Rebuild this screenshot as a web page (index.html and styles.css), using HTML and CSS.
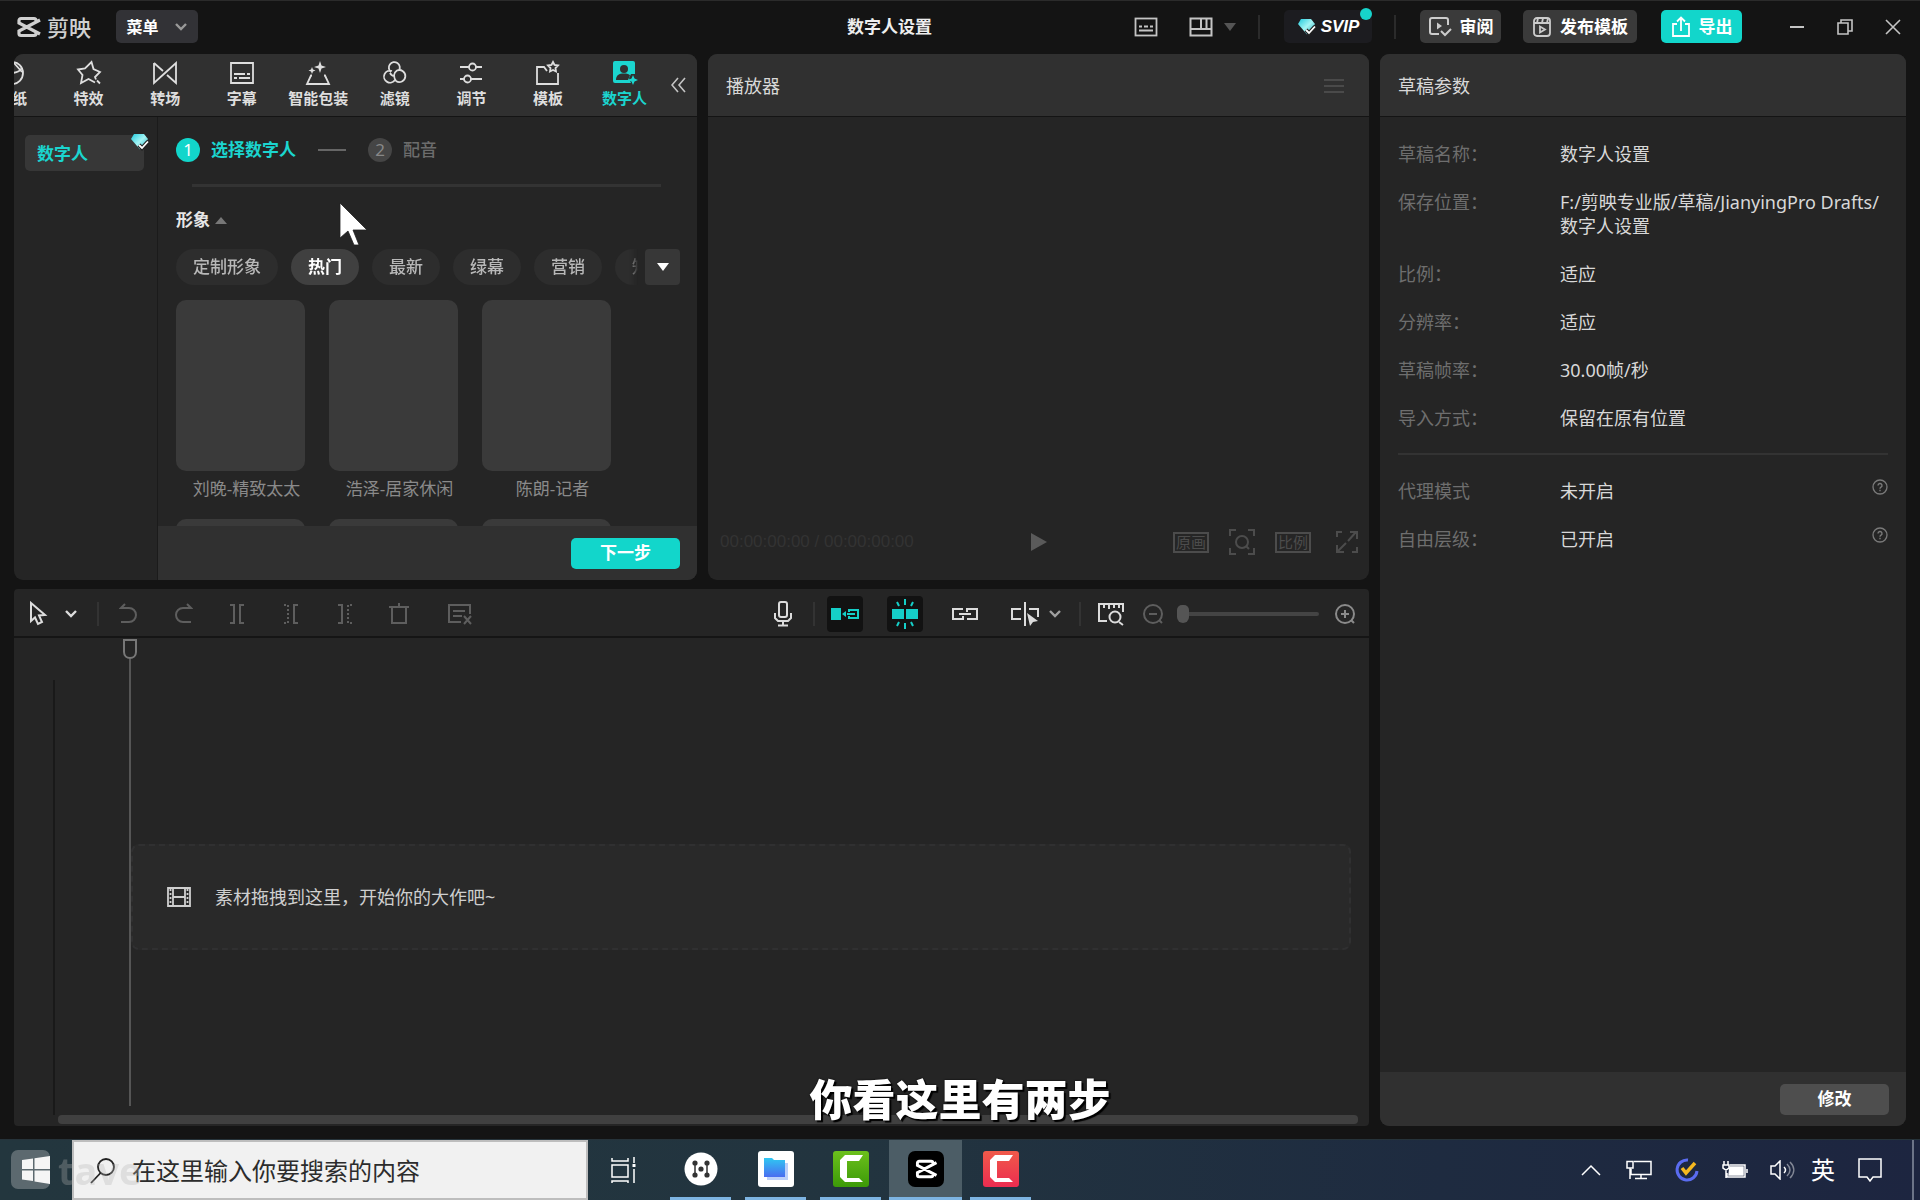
FILE: index.html
```html
<!DOCTYPE html>
<html lang="zh-CN">
<head>
<meta charset="utf-8">
<title>数字人设置</title>
<link rel="stylesheet" href="styles.css">
</head>
<body>
<svg class="defs" aria-hidden="true">
  <defs>
    <linearGradient id="gem" x1="0" y1="0" x2="1" y2="1"><stop offset="0" stop-color="#1fc9dc"/><stop offset=".5" stop-color="#a5f5f5"/><stop offset="1" stop-color="#12a5b5"/></linearGradient>
    <linearGradient id="folder" x1="0" y1="0" x2="0" y2="1"><stop offset="0" stop-color="#2fc8f2"/><stop offset="1" stop-color="#4a6df0"/></linearGradient>
    <linearGradient id="green" x1="0" y1="0" x2="0" y2="1"><stop offset="0" stop-color="#6cc01c"/><stop offset="1" stop-color="#3c9a08"/></linearGradient>
    <linearGradient id="red" x1="0" y1="0" x2="0" y2="1"><stop offset="0" stop-color="#f05a4a"/><stop offset="1" stop-color="#ec2c50"/></linearGradient>
    <symbol id="i-chev" viewBox="0 0 14 10"><path d="M2 2l5 5 5-5" fill="none" stroke="currentColor" stroke-width="2.4"/></symbol>
    <symbol id="i-cc" viewBox="0 0 26 22"><path d="M20 6V4.500a2 2 0 0 0-2-2H5a2 2 0 0 0-2 2V7l21 11M24 4L3 15v2.500a2 2 0 0 0 2 2h13a2 2 0 0 0 2-2V16" fill="none" stroke="currentColor" stroke-width="3.200"/></symbol>
    <symbol id="i-gem" viewBox="0 0 20 18"><path d="M4 1h10l4 5-8 10.500L1 6z" fill="url(#gem)"/><path d="M9 12l3 3 6-6.500" fill="none" stroke="#222" stroke-width="4"/><path d="M9 12l3 3 6-6.500" fill="none" stroke="#fff" stroke-width="1.800"/></symbol>
    <symbol id="i-help" viewBox="0 0 16 16"><circle cx="8" cy="8" r="7" fill="none" stroke="currentColor" stroke-width="1.300"/><path d="M6 6.500a2 2 0 1 1 3 1.700c-.700.400-1 .800-1 1.500M8 10.800v1.400" fill="none" stroke="currentColor" stroke-width="1.400"/></symbol>
  </defs>
</svg>
<main class="app">
  <header class="titlebar">
    <div class="brand"><svg width="26" height="22"><use href="#i-cc"/></svg><span>剪映</span></div>
    <button class="menu-btn">菜单<svg width="14" height="10"><use href="#i-chev"/></svg></button>
    <h1 class="title">数字人设置</h1>
    <div class="title-actions">
      <button class="ghost" aria-label="快捷键"><svg width="24" height="20" viewBox="0 0 24 20" fill="none" stroke="currentColor" stroke-width="1.800"><rect x="1.500" y="1.500" width="21" height="17"/><path d="M5 9.500h3m2 0h4m2 0h3M5 13.500h14"/></svg></button>
      <button class="ghost layout" aria-label="布局"><svg width="24" height="20" viewBox="0 0 24 20" fill="none" stroke="currentColor" stroke-width="2"><path d="M1.500 1.500h21v17h-21zM1.500 12h21M12 1.500V12M17.500 1.500V12"/></svg><svg class="dim" width="12" height="8" viewBox="0 0 12 8"><path d="M0 0h12L6 8z" fill="currentColor"/></svg></button>
      <i class="vsep"></i>
      <button class="svip"><svg width="20" height="18"><use href="#i-gem"/></svg>SVIP<i class="dot"></i></button>
      <i class="vsep"></i>
      <button class="pill-btn"><svg width="24" height="22" viewBox="0 0 24 22" fill="none" stroke="currentColor" stroke-width="2"><path d="M20 9V4a2 2 0 0 0-2-2H4a2 2 0 0 0-2 2v12a2 2 0 0 0 2 2h7M13 15l4 4 6-6"/><path d="M9 6.500v7l5-3.500z" fill="currentColor" stroke="none"/></svg>审阅</button>
      <button class="pill-btn publish"><svg width="20" height="22" viewBox="0 0 20 22" fill="none" stroke="currentColor" stroke-width="1.800"><rect x="2" y="2" width="16" height="18" rx="3"/><path d="M2 7h16M6 2L5 7M11 2l-1 5M16 2l-1 5M8 10.500v6l5-3z"/></svg>发布模板</button>
      <button class="pill-btn export"><svg width="20" height="22" viewBox="0 0 20 22" fill="none" stroke="currentColor" stroke-width="1.800"><path d="M6 8H2v12h16V8h-4M10 15V2M6 5.500L10 1.500l4 4"/></svg>导出</button>
    </div>
    <div class="win-ctl">
      <button class="ghost" aria-label="最小化"><svg width="16" height="16" viewBox="0 0 16 16"><path d="M1 8h14" stroke="currentColor" stroke-width="2"/></svg></button>
      <button class="ghost" aria-label="还原"><svg width="18" height="18" viewBox="0 0 18 18" fill="none" stroke="currentColor" stroke-width="1.600"><path d="M2 5h10v11H2zM5 5V2h11v11h-4"/></svg></button>
      <button class="ghost" aria-label="关闭"><svg width="16" height="16" viewBox="0 0 16 16"><path d="M1 1l14 14M15 1L1 15" stroke="currentColor" stroke-width="1.600"/></svg></button>
    </div>
  </header>

  <div class="workspace">
    <section class="panel library">
      <nav class="tabs">
        <div class="tab-strip">
          <button class="tab"><svg width="26" height="26" viewBox="0 0 26 26"><circle cx="13" cy="13" r="11"/><path d="M12 13c6 0 9-2 11-5M15 3l8 9"/></svg>贴纸</button>
          <button class="tab"><svg width="26" height="26" viewBox="0 0 26 26"><path d="M19 22.500L12.500 19 5 23l1.500-8L2 9.500 9 8.500 15.500 2l2 7 6.500 3-5 5 1 2.500M21 20.500l3 3"/></svg>特效</button>
          <button class="tab"><svg width="26" height="26" viewBox="0 0 26 26"><path d="M2 3v20L13 13 24 3v20L15 15M2 3l9 8"/></svg>转场</button>
          <button class="tab"><svg width="26" height="26" viewBox="0 0 26 26"><path d="M2 3h22v20H2zM5 14h11m2 0h3M5 18h3m2 0h11"/></svg>字幕</button>
          <button class="tab"><svg width="26" height="26" viewBox="0 0 26 26"><path d="M7 15.500H6L2 24h22l-4-8.500h-1"/><path class="fill" d="M15 1l1.500 4.500L21 7l-4.500 1.500L15 13l-1.500-4.500L9 7l4.500-1.500zM7 7l1 2.500 2.500 1L8 11.500 7 14l-1-2.500-2.500-1L6 9.500z"/></svg>智能包装</button>
          <button class="tab"><svg width="26" height="26" viewBox="0 0 26 26"><path d="M9 12a5.500 5.500 0 1 1 8-1.500M10 11a6 6 0 1 0 3 9M14 21a6 6 0 1 0 1-10.500c-3 2-4 6-1 10.500M8 13c1 2 2.500 3 4.500 3"/></svg>滤镜</button>
          <button class="tab"><svg width="26" height="26" viewBox="0 0 26 26"><path d="M2 7h9m7 0h6M2 19h4m7 0h11"/><circle cx="14.500" cy="7" r="3.500"/><circle cx="9.500" cy="19" r="3.500"/></svg>调节</button>
          <button class="tab"><svg width="26" height="26" viewBox="0 0 26 26"><path d="M23 13v11H2V7h7l3 4M18 2l1.500 3 3.500.500-2.500 2.500.500 3.500-3-1.500-3 1.500.500-3.500L13 5.500l3.500-.500z"/></svg>模板</button>
          <button class="tab active"><svg width="26" height="26" viewBox="0 0 26 26"><path class="fill" d="M3 1h18a2 2 0 0 1 2 2v11h-4l-2 4 2 5H3a2 2 0 0 1-2-2V3a2 2 0 0 1 2-2z"/><circle class="hole" cx="12" cy="9" r="4"/><path class="hole" d="M4 20c0-5 3-6.500 8-6.500 3 0 5 .500 6 2L16 20z"/><path class="fill" d="M21 15l1.500 3.500L26 20l-3.500 1.500L21 25l-1.500-3.500L16 20l3.500-1.500z"/></svg>数字人</button>
        </div>
        <button class="collapse ghost" aria-label="收起"><svg width="16" height="16" viewBox="0 0 16 16" fill="none" stroke="currentColor" stroke-width="1.600"><path d="M7 1L1 8l6 7M14 1L8 8l6 7"/></svg></button>
      </nav>
      <div class="library-body">
        <aside class="side"><button class="side-item">数字人<svg class="badge" width="20" height="18"><use href="#i-gem"/></svg></button></aside>
        <div class="content">
          <div class="scroll">
            <ol class="steps">
              <li class="on"><b>1</b>选择数字人</li>
              <li class="dash"></li>
              <li><b>2</b>配音</li>
            </ol>
            <div class="rule"></div>
            <h2 class="group">形象<svg width="12" height="7" viewBox="0 0 12 7"><path d="M0 7h12L6 0z" fill="#777"/></svg></h2>
            <div class="filters">
              <div class="chips"><button>定制形象</button><button class="on">热门</button><button>最新</button><button>绿幕</button><button>营销</button><button>知识</button></div>
              <button class="more" aria-label="更多"><svg width="12" height="8" viewBox="0 0 12 8"><path d="M0 0h12L6 8z" fill="currentColor"/></svg></button>
            </div>
            <div class="cards">
              <figure><div class="thumb"></div><figcaption>刘晚-精致太太</figcaption></figure>
              <figure><div class="thumb"></div><figcaption>浩泽-居家休闲</figcaption></figure>
              <figure><div class="thumb"></div><figcaption>陈朗-记者</figcaption></figure>
              <figure><div class="thumb"></div></figure>
              <figure><div class="thumb"></div></figure>
              <figure><div class="thumb"></div></figure>
            </div>
          </div>
          <footer class="foot"><button class="primary">下一步</button></footer>
        </div>
      </div>
    </section>

    <section class="panel player">
      <header class="panel-head">播放器<svg width="20" height="16" viewBox="0 0 20 16"><path d="M0 2h20M0 8h20M0 14h20" stroke="#4a4a4a" stroke-width="2"/></svg></header>
      <div class="stage"></div>
      <div class="player-bar">
        <span class="time">00:00:00:00 / 00:00:00:00</span>
        <button class="ghost play" aria-label="播放"><svg width="16" height="18" viewBox="0 0 16 18"><path d="M0 0l16 9L0 18z" fill="#5a5a5a"/></svg></button>
        <div class="player-tools">
          <button class="boxed">原画</button>
          <button class="ghost" aria-label="缩放"><svg width="26" height="26" viewBox="0 0 26 26" fill="none" stroke="currentColor" stroke-width="2"><path d="M1 7V1h6M19 1h6v6M25 19v6h-6M7 25H1v-6M17 17l3 3"/><circle cx="13" cy="13" r="6"/></svg></button>
          <button class="boxed">比例</button>
          <button class="ghost full" aria-label="全屏"><svg width="22" height="22" viewBox="0 0 22 22" fill="none" stroke="currentColor" stroke-width="2"><path d="M1 6V1h5M12 10l8-9M14 1h7v7M10 12l-9 9M1 14v7h7M21 16v5h-5"/></svg></button>
        </div>
      </div>
    </section>

    <section class="panel params">
      <header class="panel-head">草稿参数</header>
      <div class="param-body">
        <dl>
          <dt>草稿名称：</dt><dd>数字人设置</dd>
          <dt>保存位置：</dt><dd>F:/剪映专业版/草稿/JianyingPro Drafts/<br>数字人设置</dd>
          <dt>比例：</dt><dd>适应</dd>
          <dt>分辨率：</dt><dd>适应</dd>
          <dt>草稿帧率：</dt><dd>30.00帧/秒</dd>
          <dt>导入方式：</dt><dd>保留在原有位置</dd>
        </dl>
        <dl class="second">
          <dt>代理模式</dt><dd>未开启<svg width="16" height="16"><use href="#i-help"/></svg></dd>
          <dt>自由层级：</dt><dd>已开启<svg width="16" height="16"><use href="#i-help"/></svg></dd>
        </dl>
      </div>
      <footer class="foot"><button class="secondary">修改</button></footer>
    </section>

    <section class="panel timeline">
      <div class="toolbar">
        <div class="tools-a">
          <button class="tool lit" aria-label="选择"><svg width="20" height="26" viewBox="0 0 20 26"><path d="M3 2v18l4-3.500L10 23l4-2-3-6.500 6-.500z"/></svg></button>
          <button class="tool lit caret" aria-label="选择工具"><svg width="14" height="10"><use href="#i-chev"/></svg></button>
        </div>
        <i class="vsep"></i>
        <div class="tools-b">
          <button class="tool" aria-label="撤销"><svg width="20" height="22" viewBox="0 0 20 22"><path d="M6 1L2 5h8a7 7 0 0 1 0 14H2"/></svg></button>
          <button class="tool" aria-label="恢复"><svg width="20" height="22" viewBox="0 0 20 22"><path d="M14 1l4 4h-8a7 7 0 0 0 0 14h8"/></svg></button>
          <button class="tool" aria-label="分割"><svg width="20" height="22" viewBox="0 0 20 22"><path d="M3 2h4v18H3M17 2h-4v18h4"/></svg></button>
          <button class="tool" aria-label="向左裁剪"><svg width="20" height="22" viewBox="0 0 20 22"><path d="M17 2h-4v18h4"/><path d="M3 2h4v18H3" stroke-dasharray="2 2"/></svg></button>
          <button class="tool" aria-label="向右裁剪"><svg width="20" height="22" viewBox="0 0 20 22"><path d="M3 2h4v18H3"/><path d="M17 2h-4v18h4" stroke-dasharray="2 2"/></svg></button>
          <button class="tool" aria-label="删除"><svg width="22" height="22" viewBox="0 0 22 22"><path d="M4 4v16h14V4M1 4h20M11 0v4"/></svg></button>
          <button class="tool wide" aria-label="文稿剪辑"><svg width="26" height="22" viewBox="0 0 26 22"><path d="M14 19H2V2h21v9M6 8h12M6 13h9M17 13l7 8M24 13l-7 8"/></svg></button>
        </div>
        <div class="tools-c">
          <button class="tool lit mid" aria-label="录音"><svg width="20" height="26" viewBox="0 0 20 26"><rect x="6" y="1" width="8" height="15" rx="2"/><path d="M2 12v5l3 3h10l3-3v-5M10 20v4M5 24.500h10"/></svg></button>
          <i class="vsep"></i>
          <div class="tools-d">
            <button class="tool toggle" aria-label="主轨磁吸"><svg width="28" height="14" viewBox="0 0 28 14"><path class="fill" d="M0 1h10v12H0zM11 7l4-3v6z"/><path d="M18 5V3h9v8h-9V9M16 7h8"/></svg></button>
            <button class="tool toggle" aria-label="自动吸附"><svg width="28" height="30" viewBox="0 0 28 30"><path class="fill" d="M1 10h12v10H1zM15 10h12v10H15z"/><path d="M14 0v6M14 24v6M6 3l2 4M22 3l-2 4M6 27l2-4M22 27l-2-4"/></svg></button>
            <button class="tool lit mid" aria-label="联动"><svg width="28" height="14" viewBox="0 0 28 14"><path d="M12 2H2v10h10V9M16 12h10V2H16v3M8 7h12"/></svg></button>
            <div class="split">
              <button class="tool lit mid" aria-label="预览轴"><svg width="30" height="26" viewBox="0 0 30 26"><path d="M11 8H2v10h9M15 1v24M19 8h9v8"/><path class="fill" d="M17 12l11 8-5 1-3 4z"/></svg></button>
              <button class="tool caret" aria-label="预览轴选项"><svg width="14" height="10"><use href="#i-chev"/></svg></button>
            </div>
          </div>
          <i class="vsep"></i>
          <button class="tool lit mid" aria-label="标尺"><svg width="28" height="24" viewBox="0 0 28 24"><path d="M10 19H2V2h24v8M7 2v4M12 2v5M17 2v4M22 2v4M22 20l4 3"/><circle cx="18" cy="15" r="5.500"/></svg></button>
          <button class="tool caret" aria-label="缩小"><svg width="22" height="22" viewBox="0 0 22 22"><circle cx="11" cy="11" r="9"/><path d="M7 11h8M17 17l3 3"/></svg></button>
          <input class="zoom" type="range" min="0" max="100" value="0" aria-label="时间线缩放">
          <button class="tool bright" aria-label="放大"><svg width="22" height="22" viewBox="0 0 22 22"><circle cx="11" cy="11" r="9"/><path d="M7 11h8M11 7v8M17 17l3 3"/></svg></button>
        </div>
      </div>
      <div class="tracks">
        <div class="gutter"></div>
        <div class="dropzone"><svg width="24" height="20" viewBox="0 0 24 20" fill="none" stroke="currentColor" stroke-width="1.800"><path d="M1 1h22v18H1zM6 1v18M18 1v18M6 10h12"/><path d="M3.500 2v16M20.500 2v16" stroke-dasharray="2 2"/></svg>素材拖拽到这里，开始你的大作吧~</div>
        <div class="playhead"><svg width="16" height="22" viewBox="0 0 16 22"><path d="M2 2h12v12c0 4-3 6-6 6s-6-2-6-6z" fill="none" stroke="#777" stroke-width="2"/></svg></div>
      </div>
      <div class="hscroll"></div>
    </section>
  </div>
</main>

<footer class="taskbar">
  <button class="start" aria-label="开始"><svg width="28" height="28" viewBox="0 0 28 28" fill="#fff"><path d="M0 4l11-1.500V13H0zM12.500 2.300L28 0v13H12.500zM0 14.500h11V25L0 23.500zM12.500 14.500H28V28l-15.500-2.500z"/></svg></button>
  <label class="search"><svg width="26" height="26" viewBox="0 0 26 26" fill="none" stroke="#222" stroke-width="1.800"><circle cx="16" cy="9" r="8"/><path d="M10.500 15L1 25"/></svg><input type="text" placeholder="在这里输入你要搜索的内容" aria-label="搜索"></label>
  <button class="taskview" aria-label="任务视图"><svg width="26" height="26" viewBox="0 0 26 26" fill="none" stroke="#fff" stroke-width="1.500"><path d="M1 1v3h16V1M1 8h16v12H1zM1 27v-3h16v3M23 0v6M23 12v14"/><path d="M21.500 7h3v3h-3z" fill="#fff" stroke="none"/></svg></button>
  <div class="apps">
    <button aria-label="应用"><svg width="36" height="36" viewBox="0 0 36 36"><circle cx="18" cy="18" r="16.500" fill="#fff"/><path d="M12 12v12M24 12v12" stroke="#333" stroke-width="1.500"/><g fill="#333"><circle cx="12" cy="12" r="2.600"/><circle cx="12" cy="24" r="2.600"/><circle cx="24" cy="12" r="2.600"/><circle cx="24" cy="24" r="2.600"/><circle cx="18" cy="18" r="2.600"/></g></svg></button>
    <button aria-label="云盘"><svg width="36" height="36" viewBox="0 0 36 36"><rect width="36" height="36" rx="3" fill="#fff"/><path d="M9 12h21v17H9z" fill="#bcd0fa"/><path d="M6 7h8l2 2h11v17H6z" fill="url(#folder)"/></svg></button>
    <button aria-label="Camtasia"><svg width="36" height="36" viewBox="0 0 36 36"><rect width="36" height="36" rx="3" fill="url(#green)"/><path d="M30 4l-4 6H14v17h12l4 4H12l-5-5V9l5-5z" fill="#fff"/></svg></button>
    <button class="current" aria-label="剪映"><svg width="36" height="36" viewBox="0 0 36 36"><rect width="36" height="36" rx="7" fill="#000"/><svg x="6" y="8" width="25" height="20" color="#fff"><use href="#i-cc"/></svg></svg></button>
    <button aria-label="录制"><svg width="36" height="36" viewBox="0 0 36 36"><rect width="36" height="36" rx="3" fill="url(#red)"/><path d="M30 4l-4 6H14v17h12l4 4H12l-5-5V9l5-5z" fill="#fff"/></svg></button>
  </div>
  <div class="tray">
    <button aria-label="显示隐藏的图标"><svg width="20" height="12" viewBox="0 0 20 12"><path d="M1 11l9-9 9 9"/></svg></button>
    <button aria-label="网络"><svg width="26" height="20" viewBox="0 0 26 20"><path d="M8 1.500h17v13H5V9M1 1.500h6V8H1zM4 8v11M15 15v3M9 18.500h12"/></svg></button>
    <button aria-label="待办"><svg width="24" height="24" viewBox="0 0 24 24"><path d="M13 2a10 10 0 1 0 9 11" stroke="#5a6cf0" stroke-width="3"/><path d="M7 10l4 5 9-10" stroke="#f5b81f" stroke-width="3.500"/></svg></button>
    <button aria-label="电池"><svg width="26" height="20" viewBox="0 0 26 20"><path d="M8 5h15v12H5v-4M2 1v4M6 1v4M1 5h6v3L4 10 1 8zM4 10v8M25 9v4"/><path d="M8 7h13v8H7z" fill="#fff"/></svg></button>
    <button aria-label="音量"><svg width="26" height="20" viewBox="0 0 26 20"><path d="M1 6v8h4l5 5V1L5 6zM14 7c2 2 2 4 0 6"/><path d="M17 4c4 4 4 8 0 12M20 2c5 5 5 11 0 16" opacity=".45"/></svg></button>
    <button class="ime">英</button>
    <button class="notice" aria-label="通知"><svg width="24" height="24" viewBox="0 0 24 24"><path d="M1 1h22v18h-8l-3 4-3-4H1z"/></svg></button>
  </div>
  <div class="watermark"><i></i><span>tave</span></div>
</footer>

<p class="caption">你看这里有两步</p>
<svg class="cursor" width="30" height="44" viewBox="0 0 30 44"><path d="M1 1v35l8-7 6 14h5l-6-15h14z" fill="#fff" stroke="#222" stroke-width=".8"/></svg>
</body>
</html>
```
FILE: styles.css
```css
* { box-sizing: border-box; margin: 0; padding: 0; }
body {
  height: 100vh;
  display: flex;
  flex-direction: column;
  overflow: hidden;
  background: #141414;
  color: #d8d8d8;
  font-family: "Noto Sans", "Noto Sans CJK SC", sans-serif;
  font-size: 18px;
  line-height: 24px;
}
button, input { font: inherit; color: inherit; background: none; border: 0; }
button { display: flex; align-items: center; justify-content: center; white-space: nowrap; }
svg { flex: none; display: block; }
ol { list-style: none; }
.defs { position: absolute; width: 0; height: 0; }

.app { flex: 1; min-height: 0; display: flex; flex-direction: column; border-top: 1px solid #2b2b2b; }
.ghost { color: #c4c4c4; }
.vsep { width: 2px; height: 24px; background: #333; flex: none; }

/* Title bar */
.titlebar { height: 53px; flex: none; display: flex; align-items: center; padding: 0 19px 2px 16px; font-size: 17px; }
.brand { display: flex; align-items: center; gap: 5px; font-size: 22px; font-weight: 500; color: #d0d0d0; width: 100px; }
.menu-btn { height: 33px; width: 82px; gap: 15px; border-radius: 5px; background: #323236; color: #fff; font-size: 16px; font-weight: 700; }
.menu-btn svg { color: #999; }
.title { margin-left: auto; font-size: 17px; font-weight: 700; color: #eee; }
.title-actions { display: flex; align-items: center; margin-left: 202px; }
.layout { margin-left: 31px; gap: 11px; }
.layout .dim { color: #555; }
.title-actions .vsep { margin: 0 24px 0 22px; background: #2b2b2b; }
.svip { position: relative; width: 88px; height: 33px; gap: 4px; border-radius: 5px; background: #1c1c20; color: #fff; font-family: "Liberation Sans", sans-serif; font-weight: 700; font-style: italic; }
.dot { position: absolute; top: -2px; right: 0; width: 12px; height: 12px; border-radius: 50%; background: #17d3cb; }
.pill-btn { height: 33px; width: 81px; gap: 8px; border-radius: 5px; background: #3a3a3a; color: #fff; font-weight: 700; }
.pill-btn svg { color: #ccc; }
.publish { width: 114px; margin-left: 22px; }
.export { width: 81px; margin-left: 24px; background: #12d6cb; }
.export svg { color: #fff; }
.win-ctl { display: flex; align-items: center; gap: 31px; margin-left: 47px; }

/* Workspace */
.workspace {
  flex: 1; min-height: 0;
  display: grid;
  grid-template-columns: minmax(0, 683fr) minmax(0, 661fr) minmax(0, 526fr);
  grid-template-rows: minmax(0, 526fr) minmax(0, 537fr);
  gap: 9px 11px;
  padding: 0 14px 13px;
}
.panel { background: #252525; border-radius: 9px; overflow: hidden; display: flex; flex-direction: column; min-width: 0; }
.params { grid-column: 3; grid-row: 1 / 3; }
.timeline { grid-column: 1 / 3; grid-row: 2; border-radius: 4px; }
.panel-head, .tabs { height: 63px; flex: none; background: #303030; border-bottom: 1px solid #141414; display: flex; align-items: center; }
.panel-head { justify-content: space-between; padding: 1px 25px 0 18px; }
.foot { height: 54px; flex: none; background: #303030; display: flex; align-items: center; justify-content: flex-end; padding: 0 17px; }
.primary, .secondary { width: 109px; height: 31px; border-radius: 5px; font-size: 17px; font-weight: 700; color: #fff; background: #12d6cb; }
.secondary { background: #4e4e4e; }

/* Library tabs */
.tab-strip { width: 95%; height: 100%; overflow: hidden; display: flex; justify-content: flex-end; }
.tab { flex: 0 0 11.8%; flex-direction: column; gap: 2px; padding-bottom: 2px; font-size: 15px; line-height: 20px; font-weight: 700; color: #dedede; }
.tab svg { fill: none; stroke: currentColor; stroke-width: 1.8; }
.tab .fill { fill: currentColor; stroke: none; }
.tab .hole { fill: #303030; stroke: none; }
.tab.active { color: #1bd5cf; }
.collapse { margin-left: 8px; }

.library-body { flex: 1; min-height: 0; display: flex; }
.side { width: 144px; flex: none; padding: 18px 13px 0 11px; border-right: 1px solid #1b1b1b; }
.side-item { position: relative; width: 100%; height: 36px; justify-content: flex-start; padding: 2px 0 0 12px; border-radius: 5px; background: #373737; color: #1bd5cf; font-size: 17px; font-weight: 700; }
.badge { position: absolute; top: -2px; right: -6px; }
.content { flex: 1; min-width: 0; display: flex; flex-direction: column; }
.scroll { flex: 1; min-height: 0; overflow: hidden; padding: 21px 17px 0 18px; }
.steps { display: flex; align-items: center; font-size: 17px; font-weight: 500; color: #6c6c6c; }
.steps li { display: flex; align-items: center; gap: 11px; }
.steps b { width: 24px; height: 24px; border-radius: 50%; background: #454545; color: #888; text-align: center; font-weight: 400; }
.steps .on { color: #1bd5cf; font-weight: 700; }
.steps .on b { background: #12d6cb; color: #fff; }
.steps .dash { width: 28px; height: 2px; margin: 0 22px; background: #666; }
.rule { height: 3px; margin: 22px 19px 21px 16px; background: #333; }
.group { display: flex; align-items: center; gap: 5px; font-size: 17px; line-height: 24px; font-weight: 700; color: #e6e6e6; }
.filters { display: flex; gap: 7px; margin: 17px 0 15px; }
.chips { flex: 1; min-width: 0; display: flex; gap: 13px; overflow: hidden; -webkit-mask-image: linear-gradient(90deg, #000 98%, transparent); mask-image: linear-gradient(90deg, #000 98%, transparent); }
.chips button { flex: none; height: 36px; padding: 0 17px; border-radius: 18px; background: #2d2d2d; color: #b8b8b8; font-size: 17px; font-weight: 500; }
.chips .on { background: #404040; color: #fff; font-weight: 700; }
.more { width: 35px; height: 36px; background: #373737; color: #fff; border-radius: 4px; }
.cards { display: grid; grid-template-columns: repeat(3, 129px); gap: 18px 24px; }
.thumb { height: 171px; border-radius: 10px; background: #3a3a3a; }
figcaption { margin-top: 6px; padding-left: 12px; text-align: center; white-space: nowrap; font-size: 17px; color: #8a8a8a; }

/* Player */
.stage { flex: 1; }
.player-bar { display: grid; grid-template-columns: 1fr auto 1fr; align-items: center; padding: 0 11px 25px 12px; color: #4c4c4c; }
.time { font-family: "Liberation Sans", sans-serif; font-size: 17px; color: #333; }
.player-tools { display: flex; justify-content: flex-end; align-items: center; gap: 20px; }
.player-tools .ghost { color: #4c4c4c; }
.player-tools .full { margin-left: 5px; }
.boxed { width: 36px; height: 21px; border: 2px solid #4c4c4c; font-size: 15px; line-height: 16px; }

/* Draft parameters */
.param-body { flex: 1; padding: 25px 18px 0; }
dl { display: grid; grid-template-columns: 162px 1fr; row-gap: 24px; white-space: nowrap; }
dt { color: #6e6e6e; }
dd { display: flex; justify-content: space-between; }
dd:has(br) { display: block; }
dd svg { color: #7a7a7a; }
.second { margin-top: 23px; padding-top: 24px; border-top: 2px solid #333; }

/* Timeline */
.toolbar { height: 49px; flex: none; display: flex; align-items: center; padding: 2px 10px 0; border-bottom: 2px solid #151515; }
.tool { width: 28px; height: 36px; color: #5e5e5e; flex: none; }
.tool svg { fill: none; stroke: currentColor; stroke-width: 2; }
.tool .fill { fill: currentColor; stroke: none; }
.tool.lit { color: #dcdcdc; }
.tool.bright { color: #8a8a8a; }
.tool.caret { width: 24px; }
.tool.mid { width: 36px; }
.tool.wide { width: 42px; }
.tool.toggle { width: 36px; border-radius: 4px; background: #121212; color: #15cfc8; }
.tools-a { display: flex; gap: 7px; }
.toolbar > .vsep { margin: 0 16px 0 14px; }
.tools-b { display: flex; gap: 26px; }
.tools-c { display: flex; align-items: center; gap: 12px; margin-left: auto; }
.tools-d { display: flex; gap: 24px; }
.split { display: flex; }
.split .caret { color: #a0a0a0; }
.zoom { appearance: none; -webkit-appearance: none; width: 142px; height: 18px; }
.zoom::-webkit-slider-runnable-track { height: 4px; background: #444; border-radius: 2px; }
.zoom::-webkit-slider-thumb { -webkit-appearance: none; width: 12px; height: 18px; margin-top: -7px; border-radius: 5px 5px 6px 6px; background: #555; }
.tracks { flex: 1; min-height: 0; position: relative; display: flex; }
.gutter { width: 41px; margin-top: 42px; border-right: 2px solid #191919; }
.dropzone { flex: 1; height: 106px; margin: 206px 18px 0 76px; padding-left: 34px; display: flex; align-items: center; gap: 24px; border: 2px dashed #303031; border-radius: 8px; background: #292929; color: #cfcfcf; }
.playhead { position: absolute; left: 108px; top: 0; bottom: 9px; width: 16px; }
.playhead::after { content: ""; position: absolute; left: 7px; top: 21px; bottom: 0; width: 2px; background: #555; }
.hscroll { height: 9px; margin: 0 11px 2px 44px; border-radius: 4px; background: #404040; flex: none; }

/* Taskbar */
.taskbar { position: relative; height: 61px; flex: none; display: flex; border-top: 1px solid #26333a; background: linear-gradient(90deg, #23363e, #22343f 45%, #1e2b40 75%, #1d2540); color: #fff; }
.start { width: 72px; }
.search { width: 516px; display: flex; align-items: center; gap: 16px; padding: 2px 0 0 16px; background: #f1f1f1; border: 2px solid #bdbdbd; }
.search input { flex: 1; min-width: 0; font-size: 24px; line-height: 32px; color: #222; outline: 0; }
.search input::placeholder { color: #2c2c2c; opacity: 1; }
.taskview { width: 72px; }
.apps { display: flex; gap: 14px; margin-left: 10px; }
.apps button { width: 61px; border-bottom: 3px solid #7db4e2; }
.apps .current { width: 73px; margin: 0 -6px; background: #4c5d66; }
.tray { display: flex; margin-left: auto; margin-right: 6px; border-right: 2px solid #6c7488; padding-right: 11px; }
.tray button { width: 48px; }
.tray svg { fill: none; stroke: #fff; stroke-width: 1.5; }
.tray .ime { width: 32px; font-size: 24px; }
.tray .notice { width: 62px; }
.watermark { position: absolute; left: 11px; top: 10px; display: flex; align-items: center; gap: 8px; color: #b4b4b4; opacity: .3; font: 700 38px/38px "Open Sans", sans-serif; pointer-events: none; }
.watermark i { width: 39px; height: 39px; border-radius: 7px; background: #e0e0e0; }

/* Overlays */
.caption { position: fixed; left: 0; right: 0; bottom: 70px; text-align: center; font-size: 43px; line-height: 60px; font-weight: 900; color: #fff; text-shadow: 2px 2px 1px #000, 0 0 2px #000; pointer-events: none; }
.cursor { position: fixed; left: 339px; top: 202px; pointer-events: none; }
```
